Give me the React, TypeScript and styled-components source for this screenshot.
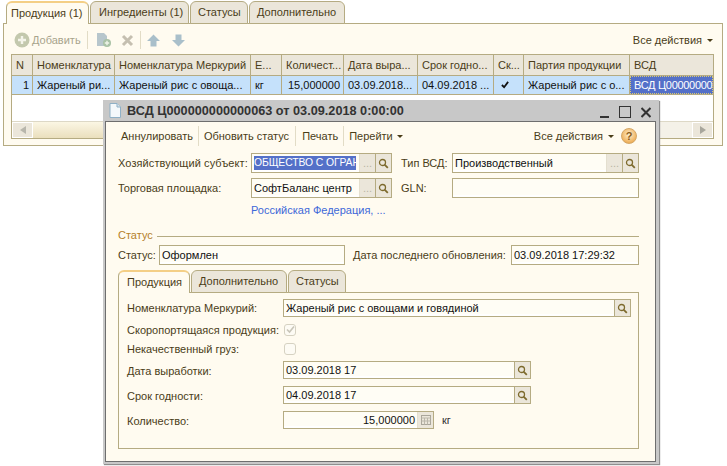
import React from "react";
import styled, { createGlobalStyle } from "styled-components";

const Global = createGlobalStyle`
  html, body { margin: 0; padding: 0; background: #fff; }
  body { font-family: "Liberation Sans", Arial, sans-serif; font-size: 11px; color: #4a3d18; }
`;

const line = "#b5ab82";
const paper = "#fffbf0";
const chrome = "#ebe6da";

const Page = styled.div`
  position: relative;
  width: 727px;
  height: 466px;
  overflow: hidden;
  background: #fff;
`;

const TopArea = styled.div`
  padding: 1px 4px 0 3px;
`;

const TabStrip = styled.div<{ $inset: number; $height: number }>`
  display: flex;
  padding-left: ${(p) => p.$inset}px;
  height: ${(p) => p.$height}px;
  margin-bottom: -1px;
  position: relative;
  z-index: 1;
`;

const Tab = styled.div<{ $active?: boolean; $width: number; $pad: number }>`
  box-sizing: border-box;
  width: ${(p) => p.$width}px;
  margin-right: 1px;
  border: 1px solid ${line};
  border-bottom: ${(p) => (p.$active ? "none" : `1px solid ${line}`)};
  border-top: ${(p) => (p.$active ? "2px solid #f4cf86" : `1px solid ${line}`)};
  border-radius: 6px 6px 0 0;
  background: ${(p) => (p.$active ? paper : chrome)};
  color: #4a3d18;
  display: flex;
  align-items: center;
  padding: 0 0 1px ${(p) => p.$pad - 1}px;
  white-space: nowrap;
`;

const OuterPanel = styled.div`
  box-sizing: border-box;
  height: 123px;
  background: ${paper};
  border: 1px solid ${line};
  padding: 0 8px 6px 7px;
`;

const Toolbar = styled.div`
  box-sizing: border-box;
  height: 30px;
  display: flex;
  align-items: center;
  padding: 2px 1px 0 3px;
`;

const Faded = styled.span`
  color: #a8a48c;
  margin: 0 6px 0 2px;
`;

const Divider = styled.span<{ $h?: number; $ml: number; $mr?: number }>`
  width: 1px;
  height: ${(p) => p.$h ?? 18}px;
  background: #e2dcc6;
  margin: 0 ${(p) => p.$mr ?? p.$ml}px 0 ${(p) => p.$ml}px;
  flex: none;
`;

const ToolIcon = styled.svg<{ $ml?: number; $mr?: number }>`
  flex: none;
  margin-left: ${(p) => p.$ml ?? 0}px;
  margin-right: ${(p) => p.$mr ?? 0}px;
`;

const AllActions = styled.div<{ $mr?: number }>`
  margin-left: auto;
  margin-right: ${(p) => p.$mr ?? 0}px;
  display: flex;
  align-items: center;
  gap: 5px;
  white-space: nowrap;
`;

const Caret = styled.span`
  width: 0;
  height: 0;
  border-left: 3px solid transparent;
  border-right: 3px solid transparent;
  border-top: 3px solid #4a3d18;
  display: inline-block;
  flex: none;
`;

const Grid = styled.div`
  border: 1px solid ${line};
  background: #fff;
  height: 85px;
  box-sizing: border-box;
  display: flex;
  flex-direction: column;
`;

const cols = "21px 82px 136px 31px 62px 74px 76px 30px 106px 1fr";

const GridRow = styled.div<{ $head?: boolean }>`
  display: grid;
  grid-template-columns: ${cols};
  height: ${(p) => (p.$head ? 21 : 19)}px;
  line-height: ${(p) => (p.$head ? 20 : 18)}px;
  flex: none;
  background: ${(p) => (p.$head ? chrome : "#c5e1fb")};
  border-bottom: 1px solid ${line};
  box-sizing: border-box;
  color: ${(p) => (p.$head ? "#4a3d18" : "#111")};
`;

const Cell = styled.div<{ $align?: string; $selected?: boolean }>`
  box-sizing: border-box;
  border-right: 1px solid ${line};
  padding: 0 3px 0 4px;
  white-space: nowrap;
  overflow: hidden;
  text-align: ${(p) => p.$align ?? "left"};
  background: ${(p) => (p.$selected ? "#5470c8" : "transparent")};
  color: ${(p) => (p.$selected ? "#fff" : "inherit")};
  ${(p) => (p.$selected ? "outline: 1px dotted #d8c878; outline-offset: -1px; letter-spacing: -0.3px; padding-right: 0;" : "")}
  &:last-child { border-right: none; }
`;

const CheckMark = styled.svg`
  margin: 3px 0 0 3px;
`;

const GridBody = styled.div`
  flex: 1;
`;

const ScrollBar = styled.div`
  height: 16px;
  display: flex;
  background: #f4f1e8;
  border-top: 1px solid #ddd8c6;
`;

const ScrollBtn = styled.div`
  width: 21px;
  background: ${chrome};
  border: 1px solid #fff;
  box-sizing: border-box;
  display: flex;
  align-items: center;
  justify-content: center;
`;

const ScrollThumb = styled.div`
  width: 500px;
  background: linear-gradient(#fbf6e4, #eadfbd);
`;

const ScrollGap = styled.div`
  flex: 1;
`;

const Arrow = styled.span<{ $dir: "left" | "right" }>`
  width: 0;
  height: 0;
  border-top: 4px solid transparent;
  border-bottom: 4px solid transparent;
  ${(p) => (p.$dir === "left" ? "border-right: 6px solid #b8b6ac;" : "border-left: 6px solid #a8a69c;")}
`;

const Window = styled.div`
  position: absolute;
  left: 103px;
  top: 100px;
  width: 556px;
  height: 364px;
  box-sizing: border-box;
  background: #c8c8c8;
  padding: 0 3px 2px 2px;
  box-shadow: 1px 1px 1px #8f8f8f;
  display: flex;
  flex-direction: column;
`;

const TitleBar = styled.div`
  height: 21px;
  flex: none;
  display: flex;
  align-items: center;
  padding-left: 3px;
`;

const TitleText = styled.div`
  font-weight: bold;
  font-size: 12.7px;
  color: #333;
  margin-left: 5px;
  white-space: nowrap;
`;

const TitleButtons = styled.div`
  margin-left: auto;
  display: flex;
  align-items: center;
  gap: 10px;
  padding: 3px 5px 0 0;
`;

const WindowBody = styled.div`
  flex: 1;
  background: ${paper};
  border: 1px solid #6e6e6e;
  padding: 3px 16px 12px 12px;
  display: flex;
  flex-direction: column;
  min-height: 0;
`;

const CommandBar = styled.div`
  height: 22px;
  display: flex;
  align-items: center;
  padding-left: 3px;
  margin-bottom: 6px;
  flex: none;
`;

const Command = styled.span`
  white-space: nowrap;
  display: inline-flex;
  align-items: center;
  gap: 4px;
`;

const Help = styled.div`
  width: 16px;
  height: 16px;
  border-radius: 50%;
  margin: 0 2px 0 4px;
  background: radial-gradient(circle at 50% 40%, #fff0d0, #efb25e 70%, #d89c4a);
  border: 1px solid #d5a766;
  box-sizing: border-box;
  color: #8a5b18;
  font-weight: bold;
  font-size: 11px;
  display: flex;
  align-items: center;
  justify-content: center;
`;

const FormRow = styled.div`
  display: flex;
  align-items: center;
  height: 20px;
  margin-bottom: 5px;
  flex: none;
`;

const Label = styled.span<{ $w: number; $ml?: number; $ls?: number }>`
  width: ${(p) => p.$w}px;
  margin-left: ${(p) => p.$ml ?? 0}px;
  letter-spacing: ${(p) => p.$ls ?? 0}px;
  flex: none;
  white-space: nowrap;
`;

const LowLabel = styled(Label)`
  padding-top: 2px;
`;

const Field = styled.div<{ $w?: number; $h?: number; $align?: string }>`
  box-sizing: border-box;
  width: ${(p) => (p.$w ? `${p.$w}px` : "auto")};
  height: ${(p) => p.$h ?? 20}px;
  border: 1px solid ${line};
  background: #fffdf5;
  box-shadow: inset 0 -2px 0 #fff;
  display: flex;
  align-items: stretch;
  flex: none;
  color: #111;
  overflow: hidden;
  text-align: ${(p) => p.$align ?? "left"};
`;

const FieldText = styled.div<{ $lh?: number }>`
  flex: 1;
  min-width: 0;
  padding: 0 2px;
  line-height: ${(p) => p.$lh ?? 18}px;
  white-space: nowrap;
  overflow: hidden;
`;

const Selected = styled.div`
  flex: 1;
  min-width: 0;
  margin: 2px 3px 2px 2px;
  background: #5470c8;
  color: #fff;
  font-size: 10.4px;
  letter-spacing: -0.1px;
  line-height: 14px;
  white-space: nowrap;
  overflow: hidden;
`;

const FieldBtn = styled.div<{ $w?: number }>`
  width: ${(p) => p.$w ?? 15}px;
  flex: none;
  background: ${chrome};
  border-left: 1px solid #e4dfcf;
  display: flex;
  align-items: center;
  justify-content: center;
  color: #b9b5a2;
  font-size: 11px;
  line-height: 14px;
`;

const SearchBtn = styled(FieldBtn)`
  border-left: 1px solid ${line};
`;

const LinkRow = styled.div`
  padding-left: 133px;
  height: 14px;
  line-height: 14px;
  color: #3d68d8;
  margin-bottom: 11px;
  flex: none;
`;

const GroupTitle = styled.div`
  display: flex;
  align-items: center;
  gap: 4px;
  color: #b5802a;
  height: 14px;
  margin-bottom: 3px;
  flex: none;
  &::after { content: ""; flex: 1; height: 1px; margin-top: 3px; background: ${line}; }
`;

const InnerTabs = styled.div`
  flex: 1;
  display: flex;
  flex-direction: column;
  min-height: 0;
`;

const InnerPanel = styled.div`
  box-sizing: border-box;
  flex: 1;
  border: 1px solid ${line};
  padding: 6px 7px 0 8px;
  display: flex;
  flex-direction: column;
`;

const DetailRow = styled.div<{ $h?: number; $mb?: number }>`
  display: flex;
  align-items: center;
  height: ${(p) => p.$h ?? 18}px;
  margin-bottom: ${(p) => p.$mb ?? 7}px;
  flex: none;
`;

const Check = styled.div`
  width: 12px;
  height: 12px;
  margin-left: 1px;
  box-sizing: border-box;
  border: 1px solid #d6d2c2;
  border-radius: 3px;
  background: #fdfbf4;
  display: flex;
  align-items: center;
  justify-content: center;
`;

const Unit = styled.span`
  margin-left: 8px;
  color: #333;
`;

const Search = () => (
  <svg width="11" height="11" viewBox="0 0 11 11" fill="none">
    <circle cx="4.5" cy="4.5" r="3" stroke="#7d6a2d" strokeWidth="1.3" />
    <path d="M6.8 6.8 L9.8 9.8" stroke="#7d6a2d" strokeWidth="1.8" />
  </svg>
);

const Dots = () => <FieldBtn>...</FieldBtn>;

const heads = ["N", "Номенклатура", "Номенклатура Меркурий", "Е...", "Количест...", "Дата выра...", "Срок годно...", "Ск...", "Партия продукции", "ВСД"];

export default function App() {
  return (
    <Page>
      <Global />
      <TopArea>
        <TabStrip $inset={3} $height={23}>
          <Tab $active $width={83} $pad={5}>Продукция (1)</Tab>
          <Tab $width={99} $pad={9}>Ингредиенты (1)</Tab>
          <Tab $width={58} $pad={8}>Статусы</Tab>
          <Tab $width={96} $pad={8}>Дополнительно</Tab>
        </TabStrip>
        <OuterPanel>
          <Toolbar>
            <ToolIcon width="16" height="16" viewBox="0 0 16 16">
              <circle cx="8" cy="8" r="7.5" fill="#c3c8ad" />
              <path d="M8 4v8M4 8h8" stroke="#f4f4ea" strokeWidth="2.4" />
            </ToolIcon>
            <Faded>Добавить</Faded>
            <Divider $ml={0} />
            <ToolIcon width="17" height="16" viewBox="0 0 17 16" $ml={7}>
              <path d="M2 1h7l3 3v10H2z" fill="#b7c6cc" />
              <circle cx="12" cy="11" r="4" fill="#a9c2a5" />
              <path d="M12 8.8v4.4M9.8 11h4.4" stroke="#eef4e8" strokeWidth="1.4" />
            </ToolIcon>
            <ToolIcon width="13" height="13" viewBox="0 0 13 13" $ml={9}>
              <path d="M2 2l9 9M11 2l-9 9" stroke="#c5bfb0" strokeWidth="3" />
            </ToolIcon>
            <Divider $ml={6} />
            <ToolIcon width="13" height="13" viewBox="0 0 13 13" $mr={12}>
              <path d="M6.5 0.5L13 7H9.5v5.5h-6V7H0z" fill="#a9bfca" />
            </ToolIcon>
            <ToolIcon width="13" height="13" viewBox="0 0 13 13">
              <path d="M6.5 12.5L13 6H9.5V0.5h-6V6H0z" fill="#a9bfca" />
            </ToolIcon>
            <AllActions>Все действия <Caret /></AllActions>
          </Toolbar>
          <Grid>
            <GridRow $head>
              {heads.map((h) => <Cell key={h}>{h}</Cell>)}
            </GridRow>
            <GridRow>
              <Cell $align="right">1</Cell>
              <Cell>Жареный ри...</Cell>
              <Cell>Жареный рис с овоща...</Cell>
              <Cell>кг</Cell>
              <Cell $align="right">15,000000</Cell>
              <Cell>03.09.2018...</Cell>
              <Cell>04.09.2018 ...</Cell>
              <Cell>
                <CheckMark width="8" height="8" viewBox="0 0 9 9"><path d="M1 4.5l2.5 2.5L8 1" fill="none" stroke="#111" strokeWidth="2" /></CheckMark>
              </Cell>
              <Cell>Жареный рис с о...</Cell>
              <Cell $selected>ВСД Ц00000000</Cell>
            </GridRow>
            <GridBody />
            <ScrollBar>
              <ScrollBtn><Arrow $dir="left" /></ScrollBtn>
              <ScrollThumb />
              <ScrollGap />
              <ScrollBtn><Arrow $dir="right" /></ScrollBtn>
            </ScrollBar>
          </Grid>
        </OuterPanel>
      </TopArea>

      <Window>
        <TitleBar>
          <svg width="14" height="15" viewBox="0 0 13 15">
            <path d="M1.5 .5h7l3.5 3.5v10.5h-10.5z" fill="#f4f8fb" stroke="#8fb0c6" />
            <path d="M8.5 .5v3.5h3.5" fill="#d5e3ec" stroke="#8fb0c6" />
          </svg>
          <TitleText>ВСД Ц000000000000063 от 03.09.2018 0:00:00</TitleText>
          <TitleButtons>
            <svg width="9" height="12" viewBox="0 0 9 12"><path d="M0 11h9" stroke="#333" strokeWidth="2" /></svg>
            <svg width="12" height="12" viewBox="0 0 12 12"><rect x=".5" y=".5" width="11" height="11" fill="none" stroke="#333" /></svg>
            <svg width="10" height="11" viewBox="0 0 10 11"><path d="M.5 1l9 9M9.5 1l-9 9" stroke="#333" strokeWidth="2" /></svg>
          </TitleButtons>
        </TitleBar>
        <WindowBody>
          <CommandBar>
            <Command>Аннулировать</Command>
            <Divider $ml={5} $h={20} />
            <Command>Обновить статус</Command>
            <Divider $ml={6} $h={20} />
            <Command>Печать</Command>
            <Divider $ml={5} $mr={5} $h={20} />
            <Command>Перейти <Caret /></Command>
            <AllActions $mr={3}>Все действия <Caret /></AllActions>
            <Help>?</Help>
          </CommandBar>

          <FormRow>
            <Label $w={133} $ls={0.1}>Хозяйствующий субъект:</Label>
            <Field $w={141}>
              <Selected>ОБЩЕСТВО С ОГРАН</Selected>
              <Dots />
              <SearchBtn><Search /></SearchBtn>
            </Field>
            <Label $w={51} $ml={9}>Тип ВСД:</Label>
            <Field $w={187}>
              <FieldText>Производственный</FieldText>
              <Dots />
              <SearchBtn><Search /></SearchBtn>
            </Field>
          </FormRow>
          <FormRow>
            <Label $w={133}>Торговая площадка:</Label>
            <Field $w={141}>
              <FieldText>СофтБаланс центр</FieldText>
              <Dots />
              <SearchBtn><Search /></SearchBtn>
            </Field>
            <Label $w={51} $ml={9}>GLN:</Label>
            <Field $w={187} />
          </FormRow>
          <LinkRow>Российская Федерация, ...</LinkRow>

          <GroupTitle>Статус</GroupTitle>
          <FormRow>
            <Label $w={41}>Статус:</Label>
            <Field $w={186}><FieldText>Оформлен</FieldText></Field>
            <Label $w={158} $ml={8}>Дата последнего обновления:</Label>
            <Field $w={128}><FieldText>03.09.2018 17:29:32</FieldText></Field>
          </FormRow>

          <InnerTabs>
            <TabStrip $inset={0} $height={23}>
              <Tab $active $width={72} $pad={9}>Продукция</Tab>
              <Tab $width={96} $pad={8}>Дополнительно</Tab>
              <Tab $width={58} $pad={8}>Статусы</Tab>
            </TabStrip>
            <InnerPanel>
              <DetailRow $mb={6}>
                <Label $w={156}>Номенклатура Меркурий:</Label>
                <Field $w={348} $h={18}>
                  <FieldText $lh={16}>Жареный рис с овощами и говядиной</FieldText>
                  <SearchBtn><Search /></SearchBtn>
                </Field>
              </DetailRow>
              <DetailRow $h={13} $mb={6}>
                <Label $w={156}>Скоропортящаяся продукция:</Label>
                <Check>
                  <svg width="9" height="9" viewBox="0 0 9 9"><path d="M1 4.5l2.5 2.5L8 1.5" fill="none" stroke="#c8c5b8" strokeWidth="1.6" /></svg>
                </Check>
              </DetailRow>
              <DetailRow $h={13} $mb={6}>
                <Label $w={156}>Некачественный груз:</Label>
                <Check />
              </DetailRow>
              <DetailRow>
                <LowLabel $w={156}>Дата выработки:</LowLabel>
                <Field $w={248} $h={18}>
                  <FieldText $lh={16}>03.09.2018 17</FieldText>
                  <SearchBtn><Search /></SearchBtn>
                </Field>
              </DetailRow>
              <DetailRow>
                <LowLabel $w={156}>Срок годности:</LowLabel>
                <Field $w={248} $h={18}>
                  <FieldText $lh={16}>04.09.2018 17</FieldText>
                  <SearchBtn><Search /></SearchBtn>
                </Field>
              </DetailRow>
              <DetailRow>
                <LowLabel $w={156}>Количество:</LowLabel>
                <Field $w={151} $h={18} $align="right">
                  <FieldText $lh={16}>15,000000</FieldText>
                  <FieldBtn>
                    <svg width="10" height="10" viewBox="0 0 10 10">
                      <rect x=".5" y=".5" width="9" height="9" fill="none" stroke="#aaa69a" />
                      <path d="M.5 3h9M.5 6h9M3.5 3v6.5M6.5 3v6.5" stroke="#bbb7aa" />
                    </svg>
                  </FieldBtn>
                </Field>
                <Unit>кг</Unit>
              </DetailRow>
            </InnerPanel>
          </InnerTabs>
        </WindowBody>
      </Window>
    </Page>
  );
}
